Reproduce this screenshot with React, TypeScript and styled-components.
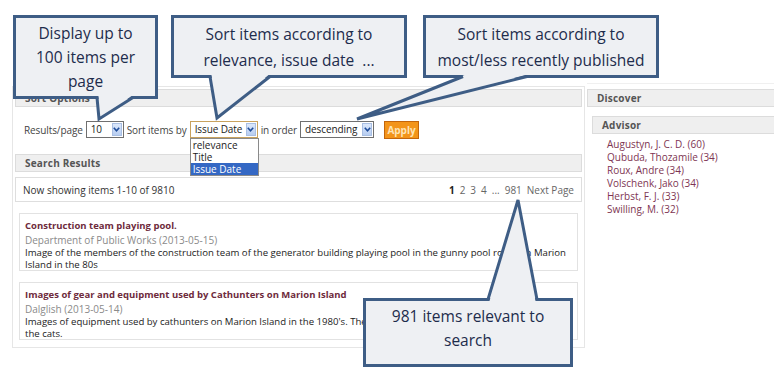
import React from 'react';
import styled, { createGlobalStyle } from 'styled-components';

const GlobalStyle = createGlobalStyle`
  html, body {
    margin: 0;
    padding: 0;
    background: #ffffff;
  }
  body {
    font-family: 'Open Sans', 'Liberation Sans', sans-serif;
    font-size: 10px;
    color: #333;
  }
`;

const Page = styled.div`
  position: relative;
  width: 774px;
  height: 380px;
  overflow: hidden;
  box-sizing: border-box;
  padding: 86px 0 0 12px;
  display: flex;
  align-items: flex-start;
  gap: 2px;
`;

const Main = styled.div`
  width: 573px;
  box-sizing: border-box;
  border: 1px solid #e6e6e6;
  padding: 2px 2px 7px 2px;
`;

const SectionHead = styled.div<{ $indent?: number }>`
  height: 18px;
  box-sizing: border-box;
  margin-left: ${({ $indent }) => $indent || 0}px;
  background: #efefef;
  border: 1px solid #dcdcdc;
  padding-left: 9px;
  font-weight: bold;
  font-size: 10px;
  line-height: 16px;
  color: #555;
  letter-spacing: 0.2px;
`;

const Controls = styled.div`
  display: flex;
  align-items: center;
  gap: 3px;
  padding: 14px 0 16px 9px;
  color: #444;
  height: 17px;
  letter-spacing: -0.1px;
`;

const Label = styled.span`
  line-height: 16px;
`;

const Select = styled.div<{ $w: number; $focus?: boolean }>`
  position: relative;
  width: ${({ $w }) => $w}px;
  height: 17px;
  box-sizing: border-box;
  border: 1px solid ${({ $focus }) => ($focus ? '#c8a25e' : '#6f6f6f')};
  background: #fff;
  display: flex;
  align-items: center;
  padding-left: 4px;
  color: #222;
`;

const SelectText = styled.span`
  flex: 1;
  line-height: 15px;
`;

const Arrow = styled.span`
  width: 10px;
  height: 13px;
  margin-right: 1px;
  background: linear-gradient(#dce8fb, #b7cdf1);
  border: 1px solid #a9bfe3;
  box-sizing: border-box;
  display: flex;
  align-items: center;
  justify-content: center;
`;

const Dropdown = styled.ul`
  position: absolute;
  left: -1px;
  top: 16px;
  width: 67px;
  margin: 0;
  padding: 0;
  list-style: none;
  background: #fff;
  border: 1px solid #8a8a8a;
  z-index: 2;
  letter-spacing: 0;
`;

const Option = styled.li<{ $active?: boolean }>`
  height: 12px;
  line-height: 12px;
  padding-left: 2px;
  background: ${({ $active }) => ($active ? '#3468c4' : '#fff')};
  color: ${({ $active }) => ($active ? '#fff' : '#222')};
`;

const ApplyButton = styled.button`
  margin-left: 7px;
  width: 35px;
  height: 18px;
  padding: 0;
  border: 1px solid #c2650c;
  background: #f39419;
  color: #fde3b5;
  font-family: inherit;
  font-size: 10px;
  font-weight: bold;
`;

const ResultsBar = styled.div`
  margin-top: 5px;
  height: 25px;
  box-sizing: border-box;
  border: 1px solid #dedede;
  display: flex;
  align-items: center;
  justify-content: space-between;
  padding: 0 7px 0 7px;
  color: #333;
`;

const Pager = styled.div`
  display: flex;
  gap: 5px;
  color: #666;
`;

const PageNum = styled.span<{ $current?: boolean }>`
  font-weight: ${({ $current }) => ($current ? 'bold' : 'normal')};
  color: ${({ $current }) => ($current ? '#222' : '#666')};
`;

const Item = styled.div`
  margin: 11px 4px 0 4px;
  border: 1px solid #e2e2e2;
  box-sizing: border-box;
  height: 58px;
  padding: 5px 4px 0 5px;
`;

const ItemTitle = styled.div`
  font-weight: bold;
  font-size: 9.5px;
  color: #6e2b3c;
  line-height: 14px;
`;

const ItemAuthor = styled.div`
  color: #8a8a8a;
  line-height: 14px;
`;

const ItemDesc = styled.div`
  color: #222;
  line-height: 12px;
  font-size: 9.6px;
`;

const Sidebar = styled.div`
  flex: 1;
  padding-top: 5px;
  margin-top: -3px;
  border-top: 1px solid #f0f0f0;
  margin-right: -14px;
`;

const SideGap = styled.div`
  height: 9px;
`;

const AdvisorList = styled.ul`
  margin: 0;
  padding: 4px 0 0 20px;
  list-style: none;
`;

const AdvisorItem = styled.li`
  color: #7e3552;
  line-height: 13px;
`;

const CalloutBox = styled.div<{ $x: number; $y: number; $w: number; $h: number; $pb?: number }>`
  position: absolute;
  left: ${({ $x }) => $x}px;
  top: ${({ $y }) => $y}px;
  width: ${({ $w }) => $w}px;
  height: ${({ $h }) => $h}px;
  box-sizing: border-box;
  padding-bottom: ${({ $pb }) => $pb || 0}px;
  border: 3px solid #3e5d85;
  background: #eef0f3;
  display: flex;
  align-items: center;
  justify-content: center;
  text-align: center;
  font-family: 'Open Sans', 'Liberation Sans', sans-serif;
  font-size: 15.5px;
  color: #1d2c4c;
  z-index: 5;
`;

const CalloutText = styled.div<{ $lh: number }>`
  line-height: ${({ $lh }) => $lh}px;
`;

const Overlay = styled.svg`
  position: absolute;
  left: 0;
  top: 0;
  pointer-events: none;
  z-index: 6;
`;

type Pt = [number, number];
type PointerDef = { a: Pt; b: Pt; tip: Pt; dir: 1 | -1 };

const pointers: PointerDef[] = [
  { a: [97, 99], b: [133, 99], tip: [99, 119], dir: 1 },
  { a: [210, 78], b: [270, 78], tip: [217, 118], dir: 1 },
  { a: [463, 78], b: [527, 78], tip: [357, 119], dir: 1 },
  { a: [488, 298], b: [537, 298], tip: [518, 200], dir: -1 },
];

const Chevron = () => (
  <svg width="7" height="5" viewBox="0 0 7 5">
    <path d="M0.8 0.8 L3.5 3.8 L6.2 0.8" fill="none" stroke="#1e4c9a" strokeWidth="1.6" />
  </svg>
);

const advisors = [
  'Augustyn, J. C. D. (60)',
  'Qubuda, Thozamile (34)',
  'Roux, Andre (34)',
  'Volschenk, Jako (34)',
  'Herbst, F. J. (33)',
  'Swilling, M. (32)',
];

export default function App() {
  return (
    <>
      <GlobalStyle />
      <Page>
        <Main>
          <SectionHead>Sort Options</SectionHead>
          <Controls>
            <Label>Results/page</Label>
            <Select $w={38}>
              <SelectText>10</SelectText>
              <Arrow><Chevron /></Arrow>
            </Select>
            <Label>Sort items by</Label>
            <Select $w={68} $focus>
              <SelectText>Issue Date</SelectText>
              <Arrow><Chevron /></Arrow>
              <Dropdown>
                <Option>relevance</Option>
                <Option>Title</Option>
                <Option $active>Issue Date</Option>
              </Dropdown>
            </Select>
            <Label>in order</Label>
            <Select $w={74}>
              <SelectText>descending</SelectText>
              <Arrow><Chevron /></Arrow>
            </Select>
            <ApplyButton>Apply</ApplyButton>
          </Controls>
          <SectionHead>Search Results</SectionHead>
          <ResultsBar>
            <span>Now showing items 1-10 of 9810</span>
            <Pager>
              <PageNum $current>1</PageNum>
              <PageNum>2</PageNum>
              <PageNum>3</PageNum>
              <PageNum>4</PageNum>
              <PageNum>...</PageNum>
              <PageNum>981</PageNum>
              <PageNum>Next Page</PageNum>
            </Pager>
          </ResultsBar>
          <Item>
            <ItemTitle>Construction team playing pool.</ItemTitle>
            <ItemAuthor>Department of Public Works (2013-05-15)</ItemAuthor>
            <ItemDesc>
              Image of the members of the construction team of the generator building playing pool in the gunny pool room on Marion Island in the 80s
            </ItemDesc>
          </Item>
          <Item>
            <ItemTitle>Images of gear and equipment used by Cathunters on Marion Island</ItemTitle>
            <ItemAuthor>Dalglish (2013-05-14)</ItemAuthor>
            <ItemDesc>
              Images of equipment used by cathunters on Marion Island in the 1980's. The cathunters were responsible for eradicating the cats.
            </ItemDesc>
          </Item>
        </Main>
        <Sidebar>
          <SectionHead>Discover</SectionHead>
          <SideGap />
          <SectionHead $indent={5}>Advisor</SectionHead>
          <AdvisorList>
            {advisors.map((a) => (
              <AdvisorItem key={a}>{a}</AdvisorItem>
            ))}
          </AdvisorList>
        </Sidebar>

        <CalloutBox $x={13} $y={15} $w={145} $h={84}>
          <CalloutText $lh={24}>
            Display up to<br />100 items per<br />page
          </CalloutText>
        </CalloutBox>
        <CalloutBox $x={171} $y={15} $w={236} $h={63}>
          <CalloutText $lh={26}>
            Sort items according to<br />relevance, issue date&nbsp; ...
          </CalloutText>
        </CalloutBox>
        <CalloutBox $x={423} $y={15} $w={236} $h={63}>
          <CalloutText $lh={26}>
            Sort items according to<br />most/less recently published
          </CalloutText>
        </CalloutBox>
        <CalloutBox $x={363} $y={298} $w={210} $h={69} $pb={9}>
          <CalloutText $lh={24}>
            981 items relevant to<br />search
          </CalloutText>
        </CalloutBox>

        <Overlay width={774} height={380}>
          {pointers.map((p, i) => {
            const inset = 3 * p.dir;
            const fill = `${p.a[0] + 1.5},${p.a[1] - inset} ${p.tip[0]},${p.tip[1]} ${p.b[0] - 1.5},${p.b[1] - inset}`;
            const edge = `${p.a[0]},${p.a[1] - 1.5 * p.dir} ${p.tip[0]},${p.tip[1]} ${p.b[0]},${p.b[1] - 1.5 * p.dir}`;
            return (
              <g key={i}>
                <polygon points={fill} fill="#eef0f3" />
                <polyline points={edge} fill="none" stroke="#3e5d85" strokeWidth={3} strokeLinejoin="miter" />
              </g>
            );
          })}
        </Overlay>
      </Page>
    </>
  );
}
